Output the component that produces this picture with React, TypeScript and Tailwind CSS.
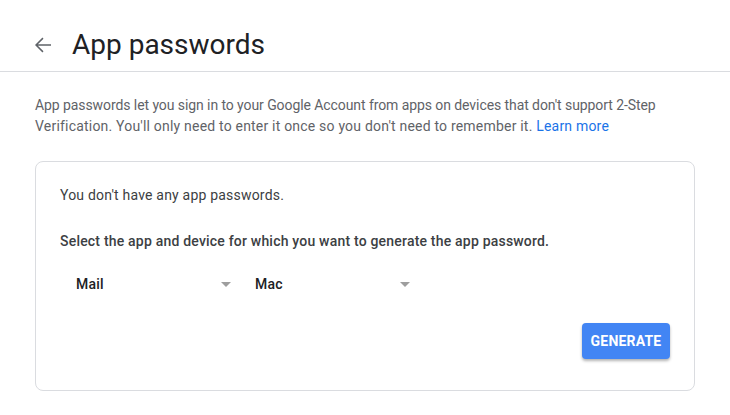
import React from "react";

function Caret() {
  return (
    <svg width="10" height="5" viewBox="0 0 10 5" className="block">
      <path d="M0 0 L10 0 L5 5 Z" fill="#9e9e9e" />
    </svg>
  );
}

function Select({ label }: { label: string }) {
  return (
    <div className="flex h-[36px] w-[179px] items-center justify-between pl-[16px] pr-[8px]">
      <span className="text-[14px] font-medium tracking-[0.2px] text-[#202124]">{label}</span>
      <Caret />
    </div>
  );
}

export default function App() {
  return (
    <div className="h-[415px] w-[730px] overflow-hidden bg-white font-['Roboto',_'Liberation_Sans',_sans-serif]">
      <div className="flex h-[72px] items-center border-b border-[#dadce0] pt-[18px]">
        <div className="ml-[31px] flex h-[24px] w-[24px] items-center justify-center">
          <svg width="24" height="24" viewBox="0 0 24 24">
            <path d="M20 11.25H6.9l5.6-5.6-1.06-1.06L4 12l7.44 7.41 1.06-1.06-5.6-5.6H20z" fill="#5f6368" />
          </svg>
        </div>
        <h1 className="ml-[17px] text-[28px] leading-[36px] font-normal text-[#202124]">App passwords</h1>
      </div>
      <div className="px-[35px] pt-[23px]">
        <p className="text-[14px] leading-[21px] text-[#5f6368]">
          <span className="tracking-[-0.08px]">
            App passwords let you sign in to your Google Account from apps on devices that don't support 2-Step
          </span>
          <br />
          <span className="tracking-[0.2px]">
            Verification. You'll only need to enter it once so you don't need to remember it.{" "}
            <span className="text-[#1a73e8]">Learn more</span>
          </span>
        </p>
        <div className="mt-[24px] w-[660px] rounded-[8px] border border-[#dadce0] px-[24px] pt-[23px] pb-[31px]">
          <p className="text-[14px] leading-[20px] tracking-[0.2px] text-[#3c4043]">You don't have any app passwords.</p>
          <p className="mt-[26px] text-[14px] leading-[20px] font-medium tracking-[0.2px] text-[#3c4043]">
            Select the app and device for which you want to generate the app password.
          </p>
          <div className="mt-[15px] flex">
            <Select label="Mail" />
            <Select label="Mac" />
          </div>
          <div className="mt-[21px] flex justify-end">
            <button className="h-[36px] w-[88px] rounded-[4px] bg-[#4285f4] text-[14px] font-bold tracking-[0.2px] text-white shadow-[0_2px_3px_rgba(0,0,0,0.3)]">
              GENERATE
            </button>
          </div>
        </div>
      </div>
    </div>
  );
}
